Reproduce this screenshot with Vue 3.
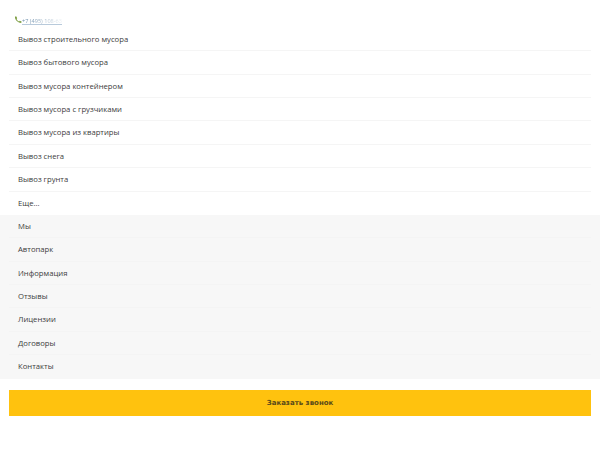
<script setup>
const services = ['Вывоз строительного мусора','Вывоз бытового мусора','Вывоз мусора контейнером','Вывоз мусора с грузчиками','Вывоз мусора из квартиры','Вывоз снега','Вывоз грунта','Еще...']
const pages = ['Мы','Автопарк','Информация','Отзывы','Лицензии','Договоры','Контакты']
</script>

<template>
  <div class="page">
    <div class="phone">
      <svg class="phone-icon" width="8" height="8" viewBox="0 0 8 8"><path d="M1 .6 C.6 3.6 3.4 6.8 7.2 7 L7.6 5.6 L5.8 4.8 L5 5.4 C4 5 3 4 2.6 3 L3.2 2.2 L2.4 .4 Z" fill="#7f9f45"/></svg>
      <span class="phone-text">+7 (495) 108-63</span>
    </div>
    <ul class="menu">
      <li v-for="s in services" :key="s" class="row">{{ s }}</li>
    </ul>
    <ul class="menu grey">
      <li v-for="p in pages" :key="p" class="row">{{ p }}</li>
    </ul>
    <div class="cta-wrap">
      <button class="cta">Заказать звонок</button>
    </div>
  </div>
</template>

<style scoped>
.page { width: 600px; height: 450px; background: #fff; font-family: "Open Sans", sans-serif; overflow: hidden; }
.phone { height: 27.8px; padding: 16px 0 0 14px; box-sizing: border-box; display: flex; align-items: flex-start; }
.phone-text {
  font-size: 5.6px; line-height: 9px; white-space: nowrap;
  text-decoration: underline; text-decoration-color: #b8cadb; color: transparent; margin-top: 0.5px;
  background: linear-gradient(90deg, #5f83a3 0%, #a2b8ca 55%, #eef2f6 100%);
  -webkit-background-clip: text; background-clip: text;
}
.menu { list-style: none; margin: 0; padding: 0 9px; }
.grey { background: #f7f7f7; }
.row {
  height: 23.4px; box-sizing: border-box; padding-left: 9px;
  font-size: 7.7px; line-height: 23.4px; color: #3c3c3c;
  border-bottom: 1px solid #f5f5f5;
}
.menu:not(.grey) .row:last-child { border-bottom: none; }
.grey .row { border-bottom-color: #f4f4f4; }
.grey .row:last-child { border-bottom: none; }
.cta-wrap { padding: 11.6px 9px 0; }
.cta {
  display: block; width: 100%; height: 26px; border: 0; padding: 0; background: #ffc20e;
  color: #5a4a1a; font-family: "DejaVu Sans", sans-serif; font-weight: 700; font-size: 7px;
}
</style>
